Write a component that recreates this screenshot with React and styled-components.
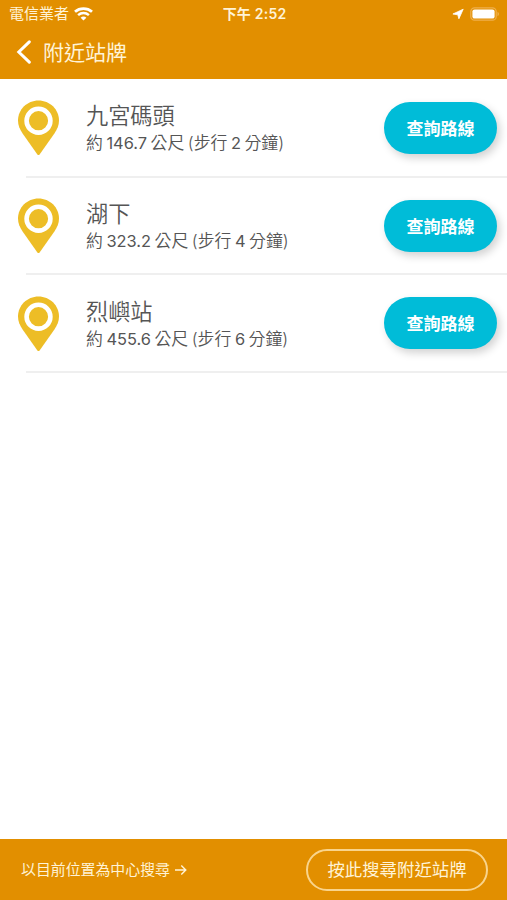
import React from "react";
import styled, { createGlobalStyle } from "styled-components";

const colors = {
  orange: "#e28f00",
  cream: "#fff3d6",
  pin: "#edbd26",
  cyan: "#00bcd8",
  text: "#555555",
  line: "#efefef",
};

const GlobalStyle = createGlobalStyle`
  * {
    box-sizing: border-box;
  }
  body {
    margin: 0;
    background: #fff;
    font-family: Inter, "Noto Sans CJK TC", sans-serif;
  }
  button {
    font-family: inherit;
    padding: 0;
  }
`;

const Screen = styled.div`
  width: 507px;
  height: 900px;
  display: flex;
  flex-direction: column;
  overflow: hidden;
`;

const Header = styled.header`
  height: 79px;
  flex: none;
  background: ${colors.orange};
  color: ${colors.cream};
`;

const StatusBar = styled.div`
  height: 27px;
  padding: 0 7px 0 9px;
  display: grid;
  grid-template-columns: 1fr auto 1fr;
  align-items: center;
  line-height: 20px;
`;

const Carrier = styled.div`
  display: flex;
  align-items: center;
  gap: 5px;
  font-size: 15px;
`;

const Clock = styled.div`
  font-size: 14px;
  font-weight: 600;
  letter-spacing: 0.2px;
`;

const StatusIcons = styled.div`
  display: flex;
  justify-content: flex-end;
  align-items: center;
  gap: 6px;
`;

const TitleBar = styled.div`
  height: 50px;
  padding-left: 16px;
  display: flex;
  align-items: center;
  gap: 11px;
`;

const Title = styled.h1`
  margin: 0;
  padding-top: 2px;
  font-size: 21px;
  font-weight: 400;
  line-height: 30px;
`;

const List = styled.main`
  flex: 1;
`;

const Row = styled.div`
  height: 97.7px;
  padding: 0 10px 0 18px;
  display: flex;
  align-items: center;
  position: relative;

  &::after {
    content: "";
    position: absolute;
    left: 26px;
    right: 0;
    bottom: -1px;
    height: 2px;
    background: ${colors.line};
  }
`;

const StopInfo = styled.div`
  flex: 1;
  margin-left: 27px;
  padding-top: 2px;
  color: ${colors.text};
`;

const StopName = styled.div`
  font-size: 22.2px;
  line-height: 29px;
  font-weight: 350;
`;

const Distance = styled.div`
  display: flex;
  gap: 3.5px;
  font-size: 16.9px;
  line-height: 26px;
  font-weight: 350;
  white-space: nowrap;
`;

const Num = styled.span`
  font-size: 16.4px;
  font-weight: 400;
`;

const RouteButton = styled.button`
  width: 113px;
  height: 52px;
  border: 0;
  border-radius: 26px;
  background: ${colors.cyan};
  color: #fff;
  font-size: 17px;
  font-weight: 700;
  padding-bottom: 1px;
  box-shadow: 3px 4px 8px rgba(0, 0, 0, 0.18);
`;

const Footer = styled.footer`
  height: 61px;
  flex: none;
  padding: 0 19px 0 21px;
  display: flex;
  align-items: center;
  justify-content: space-between;
  background: ${colors.orange};
  color: ${colors.cream};
`;

const Hint = styled.div`
  display: flex;
  align-items: center;
  gap: 5px;
  font-size: 14.9px;
  line-height: 22px;
`;

const SearchButton = styled.button`
  width: 182px;
  height: 42px;
  border: 2px solid #f9d48c;
  border-radius: 21px;
  background: transparent;
  color: ${colors.cream};
  font-size: 17.4px;
  padding-bottom: 2px;
`;

const WifiIcon = () => (
  <svg width="19" height="14" viewBox="0 0 19 14" fill="none" stroke="#fff">
    <path d="M1 4.7C5.8.5 13.2.5 18 4.7" strokeWidth="2.8" />
    <path d="M4.1 8.1c3.1-2.7 7.7-2.7 10.8 0" strokeWidth="2.5" />
    <path d="M9.5 13.6 6.6 10.7c1.6-1.5 4.2-1.5 5.8 0z" fill="#fff" stroke="none" />
  </svg>
);

const LocationIcon = () => (
  <svg width="12" height="12" viewBox="0 0 12 12" fill="#fff">
    <path d="M11.2 1.2 6.9 10.8 5.8 6.8.9 6z" stroke="#fff" strokeWidth="0.8" strokeLinejoin="round" />
  </svg>
);

const BatteryIcon = () => (
  <svg width="30" height="14" viewBox="0 0 30 14">
    <rect x="0.8" y="0.8" width="25.4" height="12.4" rx="3.8" fill="none" stroke="#efb04c" strokeWidth="1.2" />
    <rect x="2.4" y="2.4" width="22.2" height="9.2" rx="2.2" fill="#fff" />
    <path d="M27.5 4.8c2 .8 2 3.6 0 4.4z" fill="#efb04c" />
  </svg>
);

const BackIcon = () => (
  <svg width="16" height="24" viewBox="0 0 16 24" fill="none" stroke="#fff" strokeWidth="3" strokeLinecap="round">
    <path d="M13.3 1.8 2.8 12l10.5 10.2" />
  </svg>
);

const PinIcon = () => (
  <svg width="41" height="55" viewBox="0 0 41 55">
    <path
      d="M20.5 0.4C9.2 0.4 0 9.3 0 20.4c0 4.6 1.8 8.8 4.6 13L19.4 54.4c.6.8 1.6.8 2.2 0L36.4 33.4c2.8-4.2 4.6-8.4 4.6-13C41 9.3 31.8.4 20.5.4z"
      fill={colors.pin}
    />
    <circle cx="20.5" cy="20.7" r="11.9" fill={colors.pin} stroke="#fff" strokeWidth="4.6" />
  </svg>
);

const ArrowIcon = () => (
  <svg width="12" height="12" viewBox="0 0 12 12" fill="none" stroke={colors.cream} strokeWidth="1.4">
    <path d="M0 6h10.5M6.3 1.6 10.8 6l-4.5 4.4" />
  </svg>
);

const stops = [
  { name: "九宮碼頭", meters: "146.7", minutes: 2 },
  { name: "湖下", meters: "323.2", minutes: 4 },
  { name: "烈嶼站", meters: "455.6", minutes: 6 },
];

const StopRow = ({ name, meters, minutes }) => (
  <Row>
    <PinIcon />
    <StopInfo>
      <StopName>{name}</StopName>
      <Distance>
        <span>約</span>
        <Num>{meters}</Num>
        <span>公尺</span>
        <span>(步行</span>
        <Num>{minutes}</Num>
        <span>分鐘)</span>
      </Distance>
    </StopInfo>
    <RouteButton>查詢路線</RouteButton>
  </Row>
);

const App = () => {
  return (
    <>
      <GlobalStyle />
      <Screen>
        <Header>
          <StatusBar>
            <Carrier>
              <span>電信業者</span>
              <WifiIcon />
            </Carrier>
            <Clock>下午 2:52</Clock>
            <StatusIcons>
              <LocationIcon />
              <BatteryIcon />
            </StatusIcons>
          </StatusBar>
          <TitleBar>
            <BackIcon />
            <Title>附近站牌</Title>
          </TitleBar>
        </Header>
        <List>
          {stops.map((stop) => (
            <StopRow key={stop.name} {...stop} />
          ))}
        </List>
        <Footer>
          <Hint>
            <span>以目前位置為中心搜尋</span>
            <ArrowIcon />
          </Hint>
          <SearchButton>按此搜尋附近站牌</SearchButton>
        </Footer>
      </Screen>
    </>
  );
};

export default App;
